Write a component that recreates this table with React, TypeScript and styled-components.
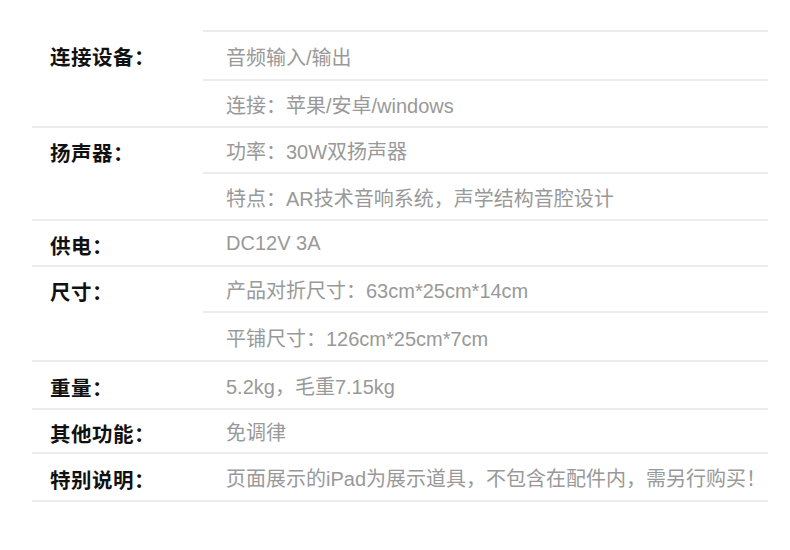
import React from "react";
import styled, { createGlobalStyle } from "styled-components";

const GlobalStyle = createGlobalStyle`
    html, body {
        margin: 0;
        padding: 0;
        background: #ffffff;
    }
`;

const Page = styled.div`
    width: 790px;
    height: 550px;
    padding-top: 30px;
    box-sizing: border-box;
    background: #ffffff;
`;

const Table = styled.div`
    margin-left: 32px;
    width: 736px;
`;

const Group = styled.div`
    display: flex;
    align-items: stretch;
`;

const LabelCell = styled.div`
    width: 171px;
    flex-shrink: 0;
    padding-left: 18px;
    box-sizing: border-box;
    border-bottom: 2px solid #ececec;
`;

const LabelText = styled.div<{ $h: number }>`
    height: ${p => p.$h}px;
    padding-top: 3px;
    box-sizing: border-box;
    display: flex;
    align-items: center;
    font-family: "Noto Sans CJK SC", "Liberation Sans", sans-serif;
    font-weight: 700;
    font-size: 20.5px;
    letter-spacing: 0.5px;
    color: #111111;
`;

const Values = styled.div<{ $first: boolean }>`
    flex: 1;
    display: flex;
    flex-direction: column;
    border-top: ${p => (p.$first ? "2px solid #ececec" : "none")};
`;

const ValueRow = styled.div<{ $h: number }>`
    height: ${p => p.$h}px;
    box-sizing: border-box;
    display: flex;
    align-items: center;
    padding-left: 23px;
    padding-top: 1px;
    border-bottom: 2px solid #ececec;
    font-family: "Liberation Sans", "Noto Sans CJK SC", sans-serif;
    font-size: 20px;
    color: #999999;
    white-space: nowrap;
`;

type Spec = { label: string; rows: { text: string; h: number }[] };

const specs: Spec[] = [
    {
        label: "连接设备：",
        rows: [
            { text: "音频输入/输出", h: 49 },
            { text: "连接：苹果/安卓/windows", h: 47 },
        ],
    },
    {
        label: "扬声器：",
        rows: [
            { text: "功率：30W双扬声器", h: 46 },
            { text: "特点：AR技术音响系统，声学结构音腔设计", h: 47 },
        ],
    },
    { label: "供电：", rows: [{ text: "DC12V 3A", h: 46 }] },
    {
        label: "尺寸：",
        rows: [
            { text: "产品对折尺寸：63cm*25cm*14cm", h: 46 },
            { text: "平铺尺寸：126cm*25cm*7cm", h: 49 },
        ],
    },
    { label: "重量：", rows: [{ text: "5.2kg，毛重7.15kg", h: 48 }] },
    { label: "其他功能：", rows: [{ text: "免调律", h: 44 }] },
    {
        label: "特别说明：",
        rows: [{ text: "页面展示的iPad为展示道具，不包含在配件内，需另行购买！", h: 48 }],
    },
];

export default function App() {
    return (
        <Page>
            <GlobalStyle />
            <Table>
                {specs.map((spec, i) => (
                    <Group key={spec.label}>
                        <LabelCell>
                            <LabelText $h={spec.rows[0].h - 2 + (i === 0 ? 2 : 0)}>
                                {spec.label}
                            </LabelText>
                        </LabelCell>
                        <Values $first={i === 0}>
                            {spec.rows.map(row => (
                                <ValueRow key={row.text} $h={row.h}>
                                    {row.text}
                                </ValueRow>
                            ))}
                        </Values>
                    </Group>
                ))}
            </Table>
        </Page>
    );
}
